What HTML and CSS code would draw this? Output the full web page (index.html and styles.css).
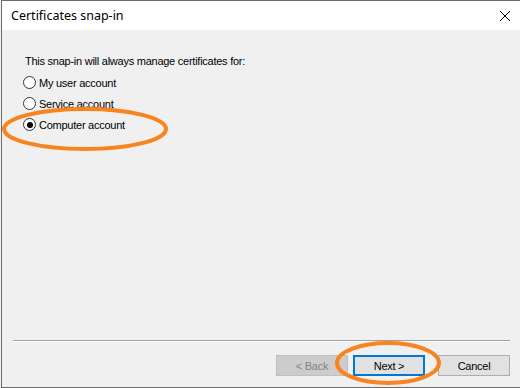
FILE: index.html
```html
<!DOCTYPE html>
<html lang="en">
<head>
    <meta charset="UTF-8">
    <meta name="viewport" content="width=device-width, initial-scale=1.0">
    <title>Certificates snap-in</title>
    <link rel="stylesheet" href="styles.css">
</head>
<body>
    <div class="window">
        <div class="titlebar">
            <span class="title">Certificates snap-in</span>
            <span class="close">
                <svg width="12" height="12" viewBox="0 0 12 12">
                    <path d="M1 1 L11 11 M11 1 L1 11" stroke="#000" stroke-width="1" fill="none"/>
                </svg>
            </span>
        </div>
        <div class="content">
            <div class="body">
                <p class="intro">This snap-in will always manage certificates for:</p>
                <label class="radio"><span class="dot"></span>My user account</label>
                <label class="radio"><span class="dot"></span>Service account</label>
                <label class="radio"><span class="dot checked"></span>Computer account</label>
            </div>
            <div class="separator"></div>
            <div class="buttons">
                <button class="btn disabled">&lt; Back</button>
                <button class="btn default">Next &gt;</button>
                <button class="btn">Cancel</button>
            </div>
        </div>
    </div>

    <!-- hand drawn markup on top of the screenshot -->
    <svg class="marks" width="520" height="388" viewBox="0 0 520 388">
        <ellipse cx="85" cy="129" rx="81" ry="20" fill="none" stroke="#f7841f" stroke-width="4"/>
        <ellipse cx="388" cy="363" rx="51" ry="20" fill="none" stroke="#f7841f" stroke-width="4"/>
    </svg>
</body>
</html>
```

FILE: styles.css
```css
body {
    margin: 0;
    background: #f0f0f0;
    font-family: "Liberation Sans", Arial, sans-serif;
    font-size: 11px;
    letter-spacing: -0.25px;
    color: #000;
    position: relative;
    width: 520px;
    height: 388px;
    overflow: hidden;
}
.window {
    box-sizing: border-box;
    margin-left: 1px;
    height: 388px;
    border: 1px solid #6b6b6b;
    border-right: none;
    display: flex;
    flex-direction: column;
    background: #f0f0f0;
}
.titlebar {
    height: 29px;
    background: #fff;
    display: flex;
    align-items: center;
    justify-content: space-between;
    padding: 0 9px 0 9px;
    flex-shrink: 0;
}
.title {
    font-family: "Noto Sans", "Open Sans", sans-serif;
    font-size: 12.5px;
    letter-spacing: 0;
    margin-top: -1px;
}
.close {
    display: flex;
    margin-right: 0;
    margin-top: 1px;
}
.content {
    flex: 1;
    display: flex;
    flex-direction: column;
}
.body {
    flex: 1;
    padding: 25px 0 0 21px;
}
.intro {
    margin: 0 0 9px 2px;
}
.radio {
    display: flex;
    align-items: center;
    height: 13px;
    margin-bottom: 8px;
    gap: 3px;
}
.dot {
    box-sizing: border-box;
    width: 13px;
    height: 13px;
    border: 1px solid #333;
    border-radius: 50%;
    background: #fff;
    display: flex;
    align-items: center;
    justify-content: center;
}
.dot.checked::after {
    content: "";
    width: 6px;
    height: 6px;
    border-radius: 50%;
    background: #000;
}
.separator {
    height: 1px;
    background: #a0a0a0;
    border-bottom: 1px solid #fff;
    margin: 0 10px 0 11px;
}
.buttons {
    display: flex;
    justify-content: flex-end;
    padding: 13px 10px 11px 0;
    height: 21px;
}
.btn {
    box-sizing: border-box;
    width: 72px;
    height: 21px;
    margin-left: 5px;
    background: #e1e1e1;
    border: 1px solid #adadad;
    font-family: "Liberation Sans", Arial, sans-serif;
    font-size: 11px;
    letter-spacing: -0.25px;
    color: #000;
    padding: 0;
}
.btn.disabled {
    background: #cccccc;
    border-color: #bfbfbf;
    color: #838383;
}
.btn.default {
    border: 2px solid #0078d7;
    margin-right: 8px;
}
.marks {
    position: absolute;
    left: 0;
    top: 0;
    pointer-events: none;
}
```
